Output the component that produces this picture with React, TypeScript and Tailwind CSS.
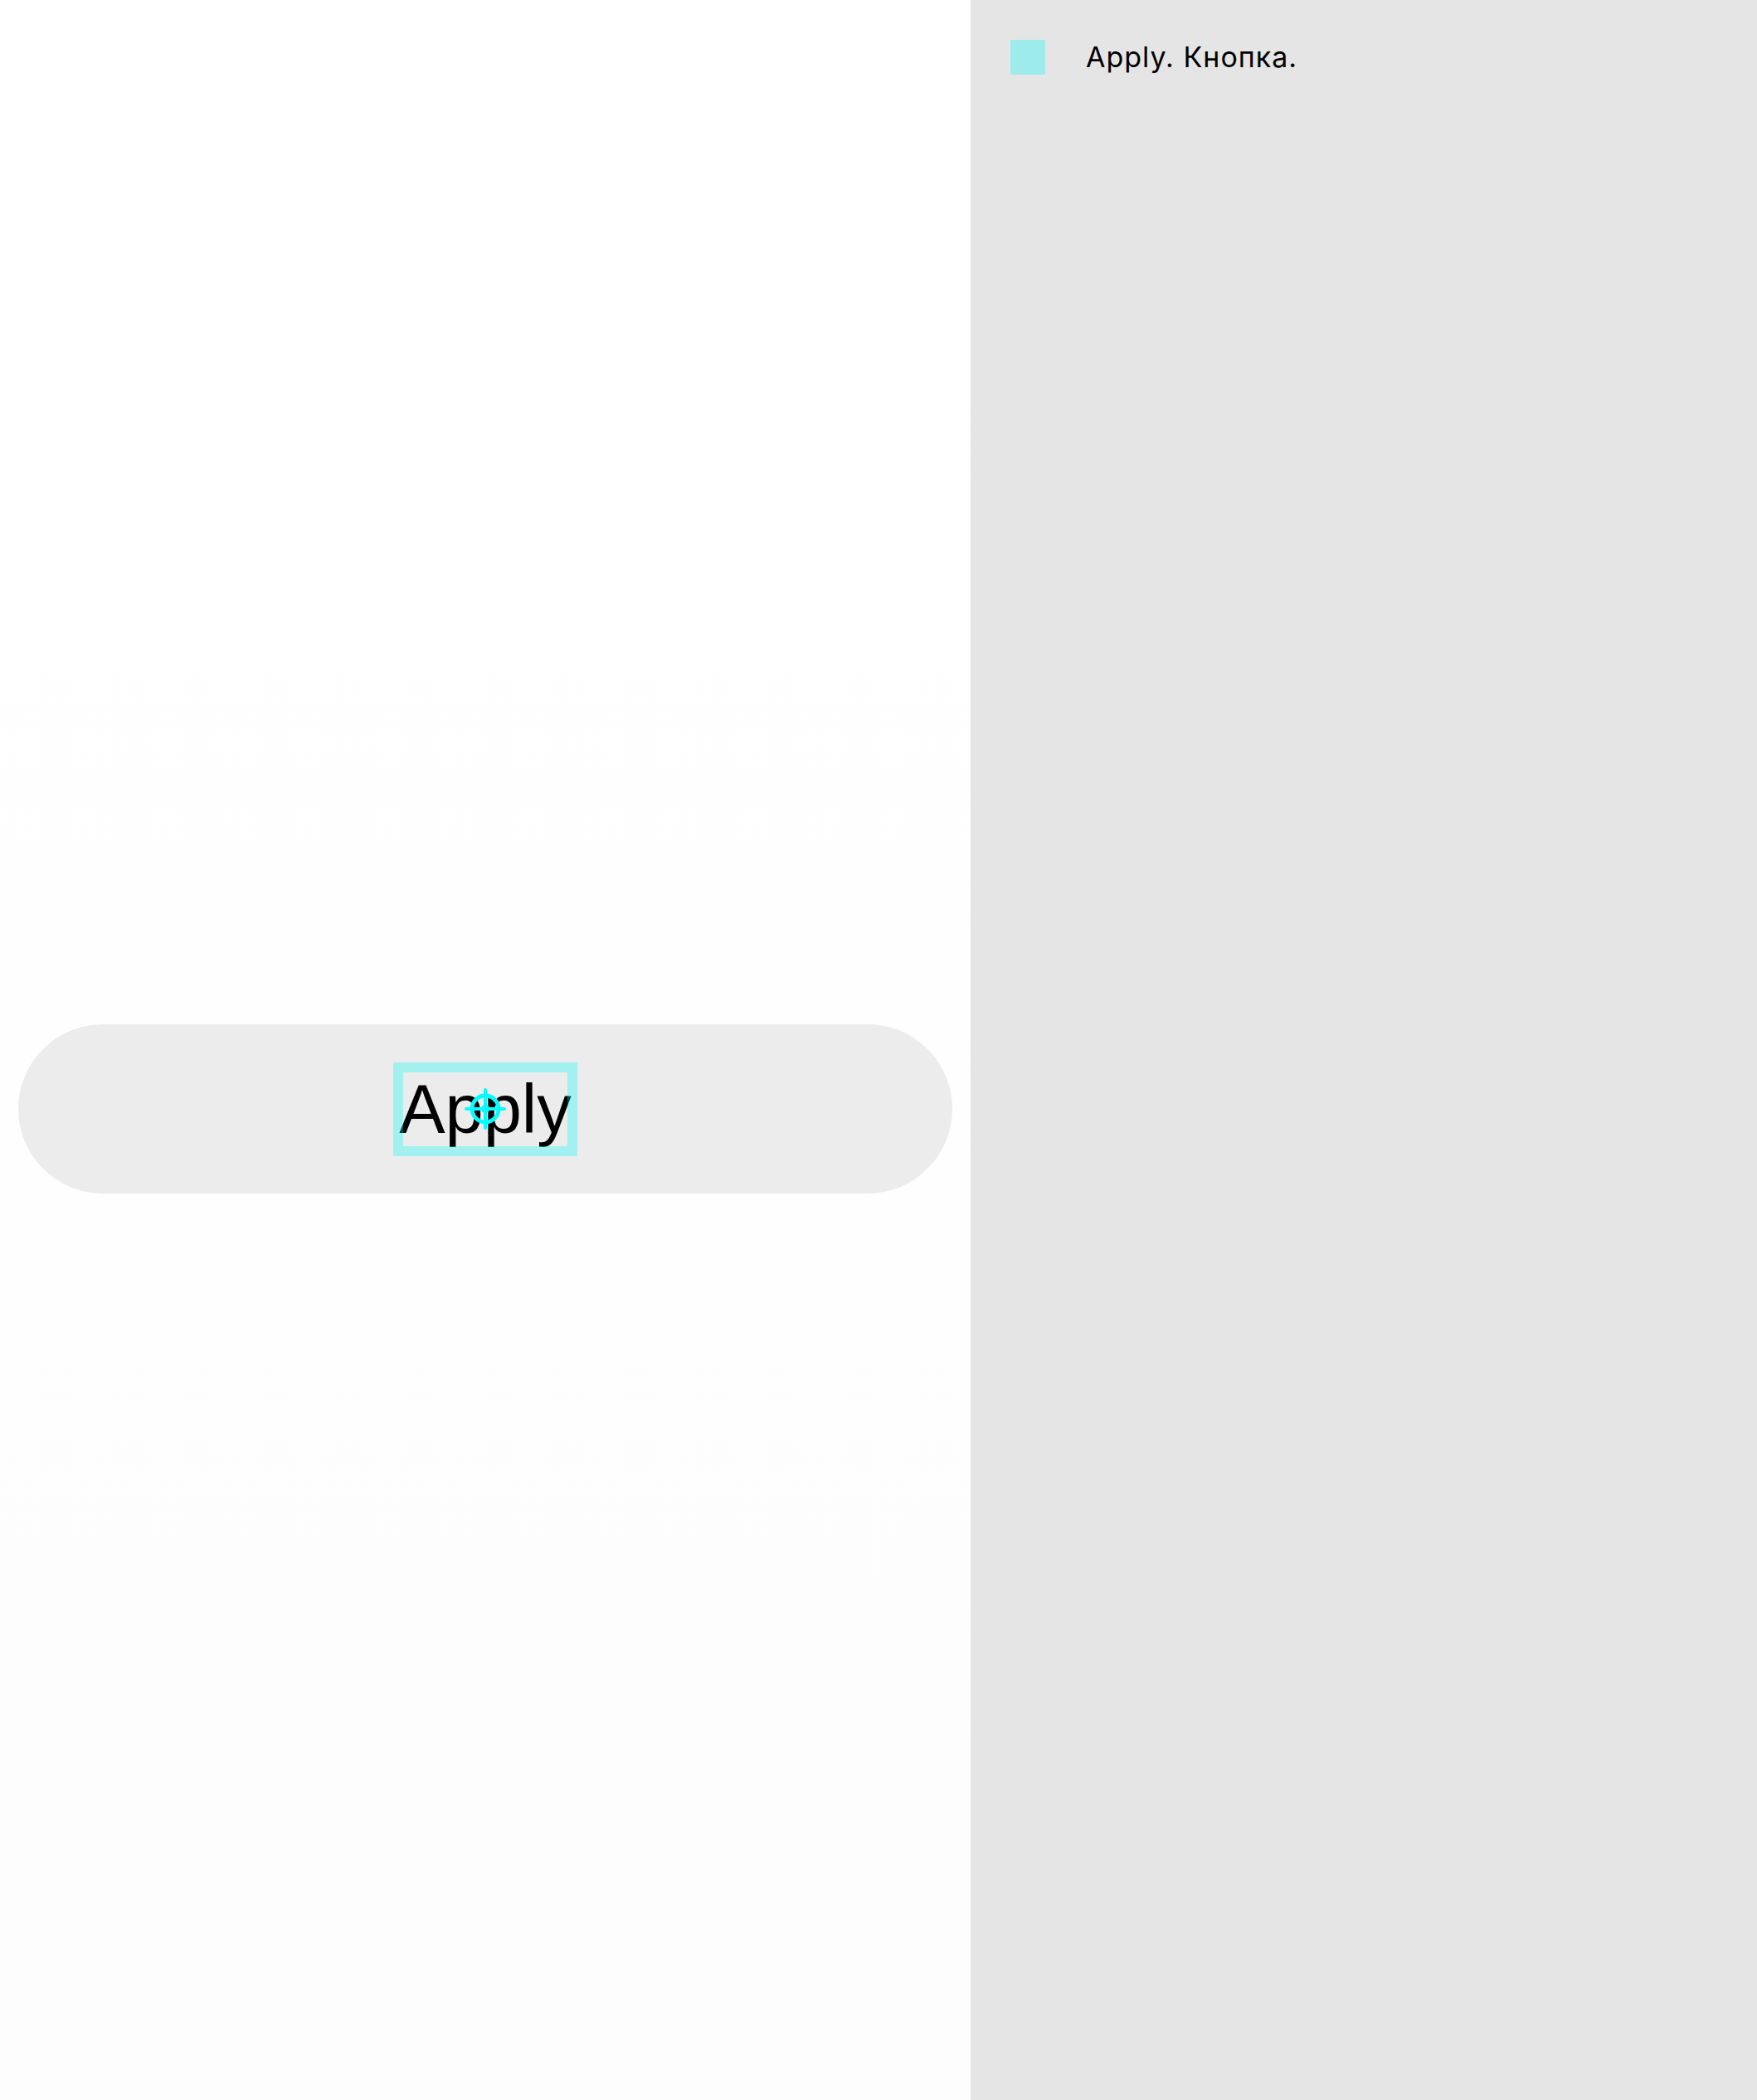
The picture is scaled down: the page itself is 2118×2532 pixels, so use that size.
import React from 'react';

const Crosshair = () => (
  <svg width="52" height="52" viewBox="0 0 52 52" className="absolute left-1/2 top-1/2 -translate-x-1/2 -translate-y-1/2">
    <circle cx="26" cy="26" r="16" fill="none" stroke="#00ffff" strokeWidth="4.8" />
    <line x1="3" y1="26" x2="49" y2="26" stroke="#00ffff" strokeWidth="4" strokeLinecap="round" />
    <line x1="26" y1="3" x2="26" y2="49" stroke="#00ffff" strokeWidth="4" strokeLinecap="round" />
    <circle cx="26" cy="26" r="5" fill="#00ffff" />
  </svg>
);

const App = () => {
  return (
    <div className="flex h-[2532px] w-[2118px]">
      <div className="flex w-[1170px] flex-col bg-linear-to-b from-white to-[#fdfdfd]">
        <div className="h-[1235px]" />
        <div className="px-[22px]">
          <div className="flex h-[204px] w-[1126px] items-center justify-center rounded-full bg-[#ececec]">
            <div className="relative h-[113px] w-[222px]">
              <div className="absolute inset-[12px] flex items-center justify-center">
                <span
                  className="whitespace-nowrap text-[83px] leading-[89px] text-black"
                  style={{ fontFamily: '"Liberation Sans", Arial, sans-serif' }}
                >
                  Apply
                </span>
              </div>
              <div className="absolute inset-0 border-[12px] border-[rgba(0,250,250,0.31)]" />
              <Crosshair />
            </div>
          </div>
        </div>
      </div>
      <div className="flex-1 bg-[#e5e5e5]">
        <div className="flex items-center pl-[48px] pt-[48px]">
          <div className="h-[42px] w-[42px] bg-[rgba(0,250,250,0.31)]" />
          <span
            className="ml-[49px] text-[34px] leading-[42px] tracking-[1px] text-black"
            style={{ fontFamily: 'Inter, "Noto Sans", sans-serif' }}
          >
            Apply. Кнопка.
          </span>
        </div>
      </div>
    </div>
  );
};

export default App;
